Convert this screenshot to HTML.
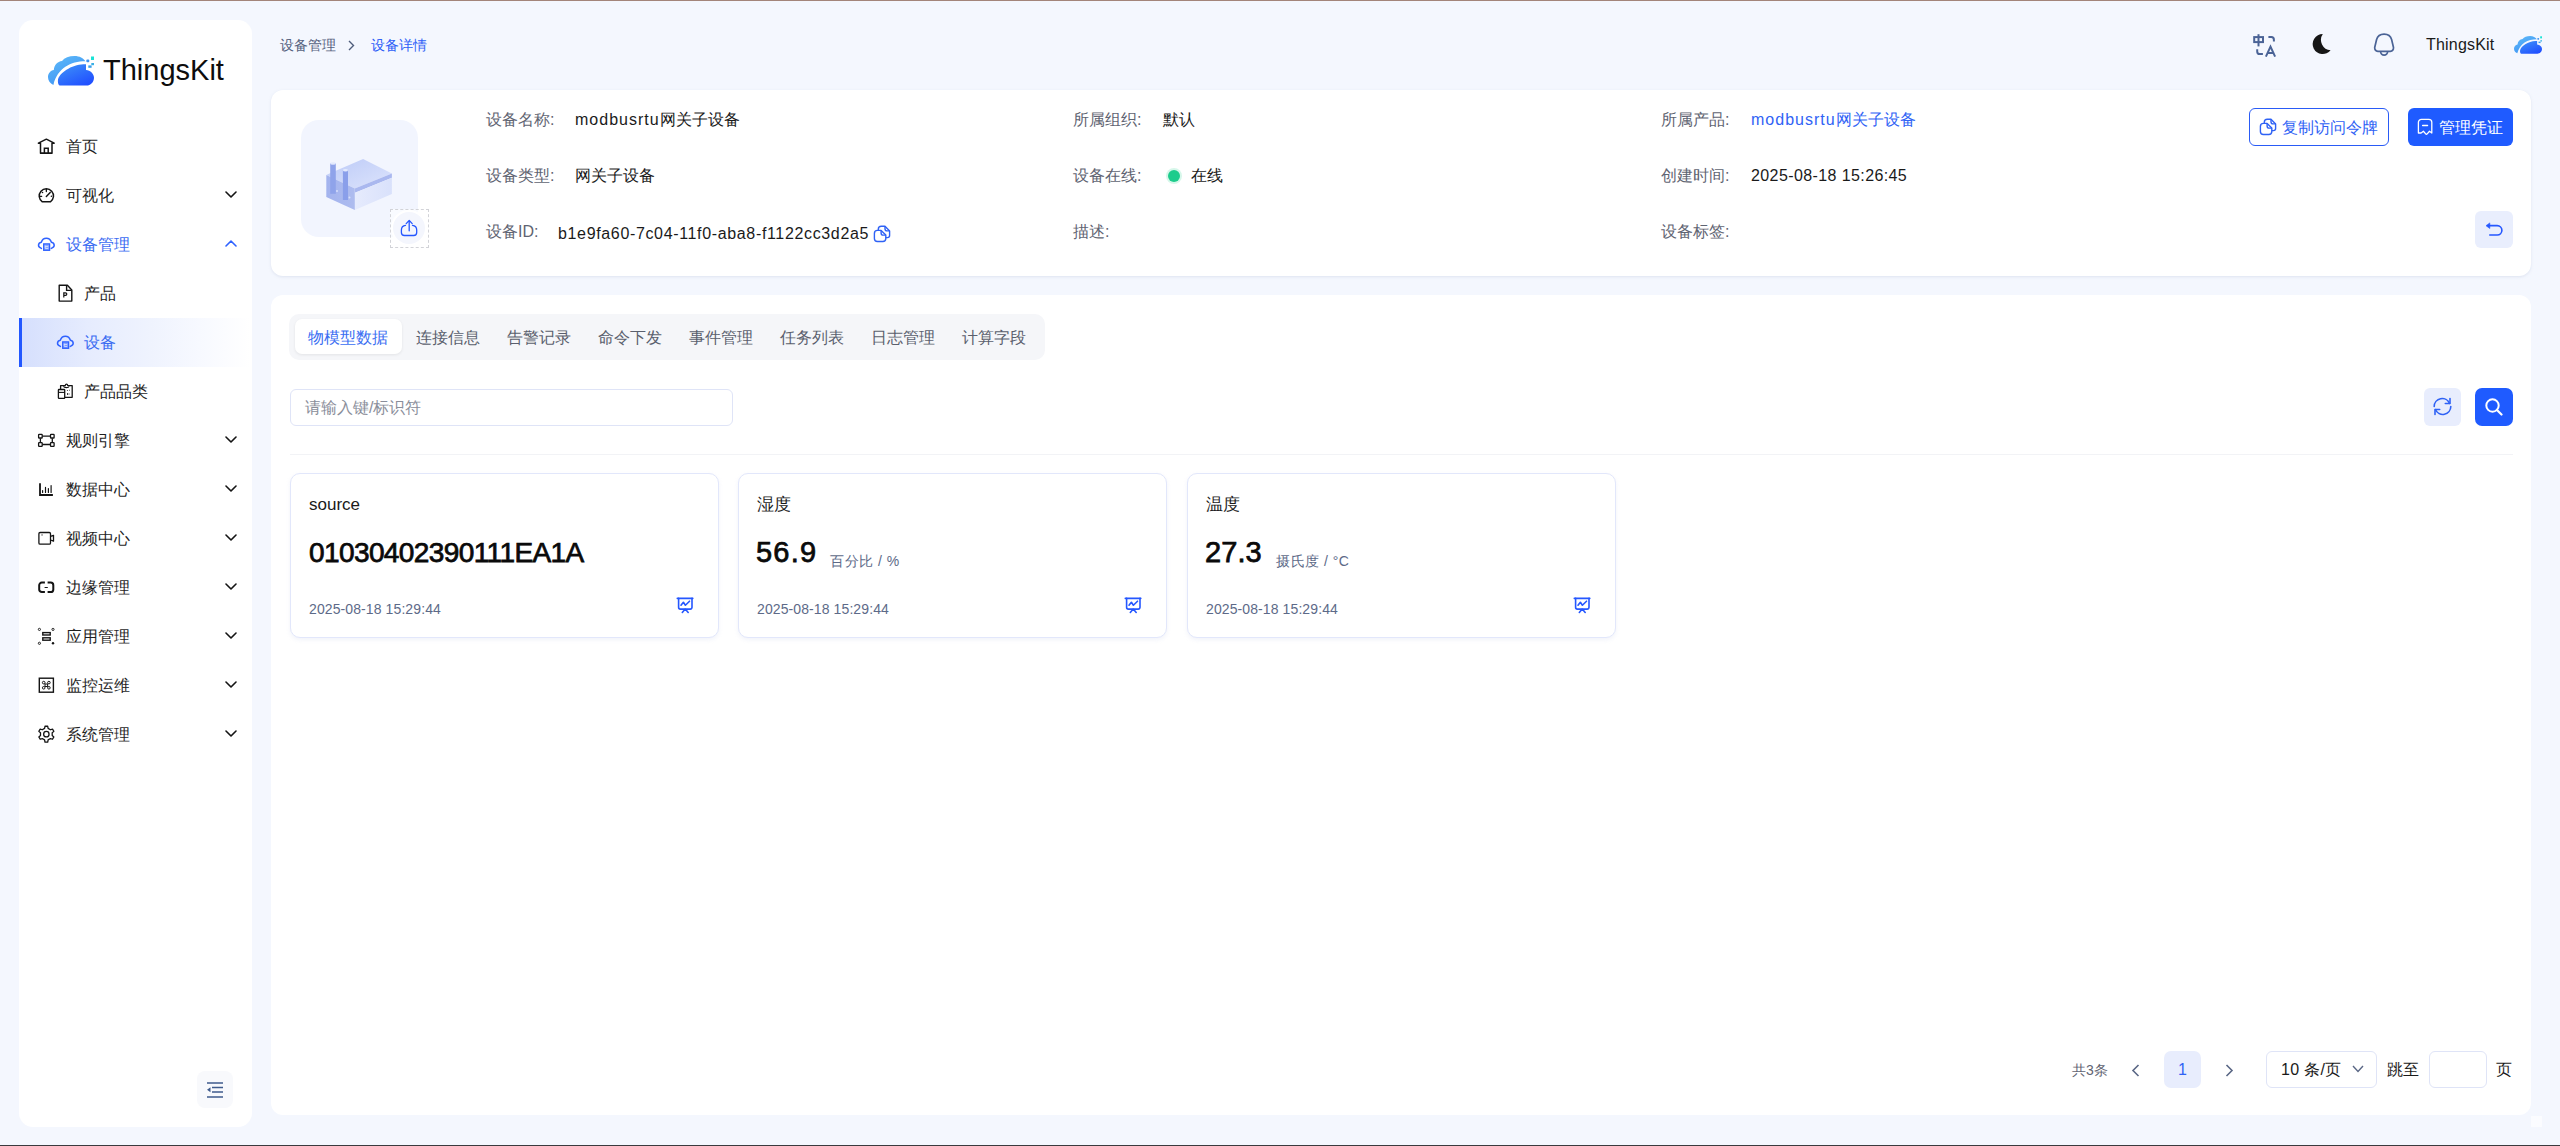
<!DOCTYPE html>
<html><head><meta charset="utf-8">
<style>
*{box-sizing:border-box;margin:0;padding:0}
html,body{width:2560px;height:1146px;overflow:hidden}
body{background:#f4f7fe;font-family:"Liberation Sans",sans-serif;font-size:16px;color:#1f1f1f;position:relative}
.a{position:absolute;white-space:nowrap}
.mt{font-size:16px;line-height:20px;color:#1f1f1f}
.lbl{font-size:16px;line-height:20px;color:#5f6472}
.val{font-size:16px;line-height:20px;color:#1a1a1a}
.tab{font-size:16px;line-height:20px;color:#5a5f6d;top:328px}
.card{background:#fff;border-radius:12px}
.n1{display:inline-block;width:10px;text-indent:-2.5px}
.dc{background:#fff;border:1px solid #e2e7fb;border-radius:10px;box-shadow:0 2px 4px rgba(180,190,230,.18)}
</style></head><body>
<div class="a" style="left:0;top:0;width:2560px;height:1px;background:#a3857a"></div>
<div class="a" style="left:0;top:1145px;width:2560px;height:1px;background:#3a3a3e"></div>

<!-- SIDEBAR -->
<div class="a" style="left:19px;top:20px;width:233px;height:1107px;background:#fff;border-radius:14px"></div>
<svg class="a" style="left:48px;top:56px" width="46" height="30" viewBox="0 0 46 30"><defs>
<linearGradient id="gb" x1="0" y1="0" x2="0.6" y2="1"><stop offset="0" stop-color="#5fbcf9"/><stop offset="1" stop-color="#3e93f4"/></linearGradient>
<linearGradient id="gf" x1="0" y1="0" x2="0.7" y2="1"><stop offset="0" stop-color="#3f95f8"/><stop offset="1" stop-color="#2150ff"/></linearGradient>
</defs>
<path d="M5.4 28.9C2 27.3 0 24.5 0 21.2C0 17.5 2.4 14.6 5.8 14C6.2 9 9.5 5.6 14 5C16.5 1.8 21 0 26.5 0C31.5 0 35.5 2.2 37.5 5.3C23 5.2 9.5 12 5.4 28.9Z" fill="url(#gb)"/>
<path d="M11.6 29.6C10.2 28.6 9.8 26.5 9.9 24.5C10.8 17 23.5 8.8 35.5 8.3L38 8.3L38 14C42.5 14.4 46 17.8 46 21.8C46 26.2 42.5 29.6 38.6 29.6Z" fill="url(#gf)"/>
<rect x="43" y=".5" width="3" height="3.5" fill="#19e3d6"/>
<rect x="38.3" y="3.4" width="3" height="2.8" rx="1" fill="#3d92f2"/>
<rect x="43.3" y="7" width="2.7" height="2.2" fill="#3ab0e6"/>
<rect x="40.3" y="9.4" width="3.3" height="2.4" fill="#3aa0ea"/></svg>
<div class="a" style="left:103px;top:52px;font-size:29px;line-height:36px;color:#0d0d0d">ThingsKit</div>
<div class="a" style="left:20px;top:318px;width:230px;height:49px;background:linear-gradient(90deg,#d5dffd 0%,#e6ecfe 30%,#eff3fe 57%,#f7f9ff 78%,#ffffff 100%)"></div>
<div class="a" style="left:19px;top:318px;width:3px;height:49px;background:#2257ff"></div>
<svg class="a" style="left:34px;top:134px;color:#141414" width="24" height="24" viewBox="0 0 24 24"><path d="M6.5 19.3V9.2H4.4L12.35 5.2 20.2 9.2H18V19.3Z" fill="none" stroke="currentColor" stroke-width="1.5" stroke-linejoin="round"/><path d="M6.5 19.3H18M10.4 19.3V14.3H14.2V19.3" fill="none" stroke="currentColor" stroke-width="1.5"/></svg>
<div class="a mt" style="left:66px;top:137px;color:#1f1f1f">首页</div>
<svg class="a" style="left:34px;top:183px;color:#141414" width="24" height="24" viewBox="0 0 24 24"><path d="M8.3 18.8A7.15 7.15 0 1 1 16.4 18.8Z" fill="none" stroke="currentColor" stroke-width="1.5" stroke-linejoin="round"/><path d="M12.35 13.4 16.2 9.4" fill="none" stroke="currentColor" stroke-width="1.5" stroke-linecap="round"/><path d="M12.35 6.3V8.6M6.3 13.3H7.7" fill="none" stroke="currentColor" stroke-width="1.3" stroke-linecap="round"/><circle cx="8.5" cy="9.5" r=".8" fill="currentColor"/><circle cx="17.4" cy="13.3" r=".8" fill="currentColor"/></svg>
<div class="a mt" style="left:66px;top:186px;color:#1f1f1f">可视化</div>
<svg class="a" style="left:225px;top:191px" width="12" height="8" viewBox="0 0 12 8"><path d="M1 1 6 6 11 1" fill="none" stroke="#141414" stroke-width="1.6" stroke-linecap="round" stroke-linejoin="round"/></svg>
<svg class="a" style="left:34px;top:232px;color:#2f62ff" width="24" height="24" viewBox="0 0 24 24"><path d="M7.4 16.4C5.7 15.8 4.5 14.7 4.5 13.3C4.5 11.9 5.6 10.6 7.3 10.2C8.1 7.9 10.1 6.3 12.35 6.3C14.6 6.3 16.6 7.9 17.4 10.2C19.1 10.6 20.2 11.9 20.2 13.3C20.2 14.7 19 15.8 17.3 16.4" fill="none" stroke="currentColor" stroke-width="1.5" stroke-linecap="round"/><rect x="9.7" y="11.9" width="5.9" height="6.4" fill="currentColor" fill-opacity=".55" stroke="currentColor" stroke-width="1.3"/><path d="M11.2 13.5V16.2M11.2 14.5h3M11.2 16.5h3" stroke="#fff" stroke-width=".7" opacity=".8"/></svg>
<div class="a mt" style="left:66px;top:235px;color:#3b6cf2">设备管理</div>
<svg class="a" style="left:225px;top:240px" width="12" height="8" viewBox="0 0 12 8"><path d="M1 6 6 1 11 6" fill="none" stroke="#2f62ff" stroke-width="1.6" stroke-linecap="round" stroke-linejoin="round"/></svg>
<svg class="a" style="left:54px;top:281px;color:#141414" width="24" height="24" viewBox="0 0 24 24"><path d="M5.2 4.2H13.4L17.8 8.9V20.1H5.2Z" fill="none" stroke="currentColor" stroke-width="1.4" stroke-linejoin="round"/><path d="M12.6 4.4V9.4H17.6" fill="none" stroke="currentColor" stroke-width="1.4"/><path d="M9.8 16.6V11.8h1.7a1.3 1.3 0 0 1 0 2.6H9.8" fill="none" stroke="currentColor" stroke-width="1.2"/></svg>
<div class="a mt" style="left:84px;top:284px;color:#1f1f1f">产品</div>
<svg class="a" style="left:53px;top:330px;color:#2f62ff" width="24" height="24" viewBox="0 0 24 24"><path d="M7.4 16.4C5.7 15.8 4.5 14.7 4.5 13.3C4.5 11.9 5.6 10.6 7.3 10.2C8.1 7.9 10.1 6.3 12.35 6.3C14.6 6.3 16.6 7.9 17.4 10.2C19.1 10.6 20.2 11.9 20.2 13.3C20.2 14.7 19 15.8 17.3 16.4" fill="none" stroke="currentColor" stroke-width="1.5" stroke-linecap="round"/><rect x="9.7" y="11.9" width="5.9" height="6.4" fill="currentColor" fill-opacity=".55" stroke="currentColor" stroke-width="1.3"/><path d="M11.2 13.5V16.2M11.2 14.5h3M11.2 16.5h3" stroke="#fff" stroke-width=".7" opacity=".8"/></svg>
<div class="a mt" style="left:84px;top:333px;color:#3b6cf2">设备</div>
<svg class="a" style="left:54px;top:379px;color:#141414" width="24" height="24" viewBox="0 0 24 24"><path d="M6.6 10.5V6.6H11.2C11.4 5.6 12 5.2 12.5 5.2S13.6 5.6 13.8 6.6H18.2V18.3H10.8" fill="none" stroke="currentColor" stroke-width="1.3" stroke-linejoin="round"/><path d="M9.4 7.4C10 8.4 11 8.6 12.4 8.6S14.8 8.4 15.2 7.4" fill="none" stroke="currentColor" stroke-width="1.1"/><rect x="4.4" y="10.5" width="6.3" height="8.8" rx=".6" fill="none" stroke="currentColor" stroke-width="1.3"/><path d="M4.4 13.4H10.7" fill="none" stroke="currentColor" stroke-width="1.1"/><circle cx="13.4" cy="11.5" r=".5" fill="currentColor"/><path d="M15.5 10.2 15.1 11.6a.45.45 0 0 0 .8 0Z" fill="currentColor"/><ellipse cx="13.6" cy="15" rx=".6" ry=".9" fill="currentColor"/><ellipse cx="15.1" cy="15" rx=".5" ry=".8" fill="currentColor" opacity=".7"/></svg>
<div class="a mt" style="left:84px;top:382px;color:#1f1f1f">产品品类</div>
<svg class="a" style="left:34px;top:428px;color:#141414" width="24" height="24" viewBox="0 0 24 24"><path d="M6.4 10.2V14.5M18.3 10.2V14.5M8.4 8.2H16.3M8.4 16.5H16.3" fill="none" stroke="currentColor" stroke-width="1.3"/><rect x="4.6" y="6.4" width="3.6" height="3.6" rx=".6" fill="none" stroke="currentColor" stroke-width="1.3"/><rect x="16.5" y="6.4" width="3.6" height="3.6" rx=".6" fill="none" stroke="currentColor" stroke-width="1.3"/><rect x="4.6" y="14.7" width="3.6" height="3.6" rx=".6" fill="none" stroke="currentColor" stroke-width="1.3"/><rect x="16.5" y="14.7" width="3.6" height="3.6" rx=".6" fill="none" stroke="currentColor" stroke-width="1.3"/></svg>
<div class="a mt" style="left:66px;top:431px;color:#1f1f1f">规则引擎</div>
<svg class="a" style="left:225px;top:436px" width="12" height="8" viewBox="0 0 12 8"><path d="M1 1 6 6 11 1" fill="none" stroke="#141414" stroke-width="1.6" stroke-linecap="round" stroke-linejoin="round"/></svg>
<svg class="a" style="left:34px;top:477px;color:#141414" width="24" height="24" viewBox="0 0 24 24"><path d="M6 6.3V18H18.9" fill="none" stroke="currentColor" stroke-width="1.8"/><path d="M8.6 13.6V15.4M11.5 10.4V15.4M14.4 11.5V15.4M17.1 8.5V15.4" fill="none" stroke="currentColor" stroke-width="1.2" stroke-linecap="round"/></svg>
<div class="a mt" style="left:66px;top:480px;color:#1f1f1f">数据中心</div>
<svg class="a" style="left:225px;top:485px" width="12" height="8" viewBox="0 0 12 8"><path d="M1 1 6 6 11 1" fill="none" stroke="#141414" stroke-width="1.6" stroke-linecap="round" stroke-linejoin="round"/></svg>
<svg class="a" style="left:34px;top:526px;color:#141414" width="24" height="24" viewBox="0 0 24 24"><rect x="4.9" y="6.5" width="11.6" height="11.7" rx="1.2" fill="none" stroke="currentColor" stroke-width="1.3"/><path d="M16.5 10.4 19.5 9.3V15.2L16.5 14" fill="none" stroke="currentColor" stroke-width="1.3" stroke-linejoin="round"/><rect x="7.4" y="8.3" width="1.3" height="1.3" fill="currentColor" opacity=".7"/></svg>
<div class="a mt" style="left:66px;top:529px;color:#1f1f1f">视频中心</div>
<svg class="a" style="left:225px;top:534px" width="12" height="8" viewBox="0 0 12 8"><path d="M1 1 6 6 11 1" fill="none" stroke="#141414" stroke-width="1.6" stroke-linecap="round" stroke-linejoin="round"/></svg>
<svg class="a" style="left:34px;top:575px;color:#141414" width="24" height="24" viewBox="0 0 24 24"><path d="M10.9 7.6H7.8A2.6 2.6 0 0 0 5.2 10.2V14.4A2.6 2.6 0 0 0 7.8 17H10.9M13.6 7.6H16.7A2.6 2.6 0 0 1 19.3 10.2V14.4A2.6 2.6 0 0 1 16.7 17H13.6" fill="none" stroke="currentColor" stroke-width="2"/><path d="M10.6 12.5H13.8" fill="none" stroke="currentColor" stroke-width="1"/></svg>
<div class="a mt" style="left:66px;top:578px;color:#1f1f1f">边缘管理</div>
<svg class="a" style="left:225px;top:583px" width="12" height="8" viewBox="0 0 12 8"><path d="M1 1 6 6 11 1" fill="none" stroke="#141414" stroke-width="1.6" stroke-linecap="round" stroke-linejoin="round"/></svg>
<svg class="a" style="left:34px;top:624px;color:#141414" width="24" height="24" viewBox="0 0 24 24"><circle cx="5.4" cy="5.4" r="1.1" fill="none" stroke="currentColor" stroke-width=".9"/><circle cx="19" cy="5.4" r="1.1" fill="none" stroke="currentColor" stroke-width=".9"/><circle cx="5.4" cy="19.3" r="1.1" fill="none" stroke="currentColor" stroke-width=".9"/><circle cx="19" cy="19.3" r="1.2" fill="currentColor"/><rect x="8.8" y="8.6" width="7.4" height="2.4" fill="none" stroke="currentColor" stroke-width="1.4"/><rect x="8.8" y="13.8" width="7.4" height="2.4" fill="none" stroke="currentColor" stroke-width="1.4"/></svg>
<div class="a mt" style="left:66px;top:627px;color:#1f1f1f">应用管理</div>
<svg class="a" style="left:225px;top:632px" width="12" height="8" viewBox="0 0 12 8"><path d="M1 1 6 6 11 1" fill="none" stroke="#141414" stroke-width="1.6" stroke-linecap="round" stroke-linejoin="round"/></svg>
<svg class="a" style="left:34px;top:673px;color:#141414" width="24" height="24" viewBox="0 0 24 24"><rect x="5.3" y="5.2" width="14.1" height="14" fill="none" stroke="currentColor" stroke-width="1.4"/><path d="M11 10.8V13.7M13.6 10.8V13.7M10.8 11H13.8M10.8 13.5H13.8" fill="none" stroke="currentColor" stroke-width="1"/><circle cx="9.7" cy="9.6" r="1.3" fill="none" stroke="currentColor" stroke-width="1"/><circle cx="14.9" cy="9.6" r="1.3" fill="none" stroke="currentColor" stroke-width="1"/><circle cx="9.7" cy="14.8" r="1.3" fill="none" stroke="currentColor" stroke-width="1"/><circle cx="14.9" cy="14.8" r="1.3" fill="none" stroke="currentColor" stroke-width="1"/></svg>
<div class="a mt" style="left:66px;top:676px;color:#1f1f1f">监控运维</div>
<svg class="a" style="left:225px;top:681px" width="12" height="8" viewBox="0 0 12 8"><path d="M1 1 6 6 11 1" fill="none" stroke="#141414" stroke-width="1.6" stroke-linecap="round" stroke-linejoin="round"/></svg>
<svg class="a" style="left:34px;top:722px;color:#141414" width="24" height="24" viewBox="0 0 24 24"><path d="M10.58 6.42 L11.00 4.27 L13.70 4.27 L14.12 6.42 L16.43 7.75 L18.50 7.04 L19.86 9.38 L18.20 10.82 L18.20 13.48 L19.86 14.92 L18.50 17.26 L16.43 16.55 L14.12 17.88 L13.70 20.03 L11.00 20.03 L10.58 17.88 L8.27 16.55 L6.20 17.26 L4.84 14.92 L6.50 13.48 L6.50 10.82 L4.84 9.38 L6.20 7.04 L8.27 7.75Z" fill="none" stroke="currentColor" stroke-width="1.3" stroke-linejoin="round"/><circle cx="12.35" cy="12.15" r="2.7" fill="none" stroke="currentColor" stroke-width="1.3"/></svg>
<div class="a mt" style="left:66px;top:725px;color:#1f1f1f">系统管理</div>
<svg class="a" style="left:225px;top:730px" width="12" height="8" viewBox="0 0 12 8"><path d="M1 1 6 6 11 1" fill="none" stroke="#141414" stroke-width="1.6" stroke-linecap="round" stroke-linejoin="round"/></svg>
<div class="a" style="left:197px;top:1071px;width:36px;height:37px;background:#f8f9fc;border-radius:8px"></div>
<svg class="a" style="left:207px;top:1082px" width="16" height="16" viewBox="0 0 16 16"><path d="M0 1h16M5 5.5h11M5 10h11M0 15h16" stroke="#3f5b8c" stroke-width="1.6"/><path d="M0 7.75 3.5 5.2V10.3Z" fill="#3f5b8c"/></svg>

<!-- HEADER -->
<div class="a" style="left:280px;top:35px;font-size:14px;line-height:20px;color:#56627e">设备管理</div>
<svg class="a" style="left:348px;top:40px" width="7" height="11" viewBox="0 0 7 11"><path d="M1 1 5.5 5.5 1 10" fill="none" stroke="#4f5d7c" stroke-width="1.4"/></svg>
<div class="a" style="left:371px;top:35px;font-size:14px;line-height:20px;color:#2d5ef7">设备详情</div>

<svg class="a" style="left:2246px;top:28px" width="34" height="34" viewBox="0 0 34 34"><g fill="none" stroke="#4a6396" stroke-width="2"><rect x="8.2" y="9.1" width="8.8" height="5"/><path d="M12.5 6.2V18.4"/><path d="M22.4 9.1H25.3a2.6 2.6 0 0 1 2.6 2.6V13.6"/><path d="M11.2 21.3V23.4a2.6 2.6 0 0 0 2.6 2.6H16.9"/><path d="M19.9 28.6 24.5 18.6 29.1 28.6M21.6 25H27.4"/></g></svg>
<svg class="a" style="left:2310px;top:30px" width="24" height="28" viewBox="0 0 24 28"><path d="M12.8 4.1A10 10 0 1 0 20.6 20.2A10.3 10.3 0 0 1 12.8 4.1Z" fill="#161616"/></svg>
<svg class="a" style="left:2366px;top:28px" width="34" height="34" viewBox="0 0 34 34"><path d="M12 23.4C9.5 23 8.6 21.5 8.7 19.5L10.6 11.5C11.5 8 14.5 6.1 18.1 6.1C21.7 6.1 24.7 8 25.6 11.5L27.5 19.5C27.6 21.5 26.7 23 24.2 23.4Z" fill="none" stroke="#4a6396" stroke-width="1.7" stroke-linejoin="round"/><path d="M14.6 23.6A3.5 3.5 0 0 0 21.6 23.6" fill="none" stroke="#4a6396" stroke-width="1.7"/></svg>
<div class="a" style="left:2426px;top:35px;font-size:16px;line-height:20px;color:#1a1a1a;letter-spacing:.2px">ThingsKit</div>
<svg class="a" style="left:2514px;top:36px" width="28" height="18" viewBox="0 0 46 30" preserveAspectRatio="none"><defs>
<linearGradient id="gb2" x1="0" y1="0" x2="0.6" y2="1"><stop offset="0" stop-color="#5fbcf9"/><stop offset="1" stop-color="#3e93f4"/></linearGradient>
<linearGradient id="gf2" x1="0" y1="0" x2="0.7" y2="1"><stop offset="0" stop-color="#3f95f8"/><stop offset="1" stop-color="#2150ff"/></linearGradient>
</defs>
<path d="M5.4 28.9C2 27.3 0 24.5 0 21.2C0 17.5 2.4 14.6 5.8 14C6.2 9 9.5 5.6 14 5C16.5 1.8 21 0 26.5 0C31.5 0 35.5 2.2 37.5 5.3C23 5.2 9.5 12 5.4 28.9Z" fill="url(#gb2)"/>
<path d="M11.6 29.6C10.2 28.6 9.8 26.5 9.9 24.5C10.8 17 23.5 8.8 35.5 8.3L38 8.3L38 14C42.5 14.4 46 17.8 46 21.8C46 26.2 42.5 29.6 38.6 29.6Z" fill="url(#gf2)"/>
<rect x="43" y=".5" width="3" height="3.5" fill="#19e3d6"/>
<rect x="38.3" y="3.4" width="3" height="2.8" rx="1" fill="#3d92f2"/>
<rect x="43.3" y="7" width="2.7" height="2.2" fill="#3ab0e6"/>
<rect x="40.3" y="9.4" width="3.3" height="2.4" fill="#3aa0ea"/></svg>

<!-- INFO CARD -->
<div class="a card" style="left:271px;top:90px;width:2260px;height:186px;box-shadow:0 1px 3px rgba(160,170,200,.25)"></div>
<div class="a" style="left:301px;top:120px;width:117px;height:117px;background:#f2f5fe;border-radius:18px"></div>
<svg class="a" style="left:318px;top:150px" width="82" height="68" viewBox="0 0 82 68">
<defs><linearGradient id="dt" x1="0" y1="0" x2="1" y2="1"><stop offset="0" stop-color="#bccaf7"/><stop offset="1" stop-color="#dde4fc"/></linearGradient>
<linearGradient id="dr" x1="0" y1="0" x2="1" y2="0"><stop offset="0" stop-color="#e6ebfd"/><stop offset="1" stop-color="#d9e1fb"/></linearGradient>
<linearGradient id="dl" x1="0" y1="0" x2="1" y2="0"><stop offset="0" stop-color="#a3b3ee"/><stop offset="1" stop-color="#aebcef"/></linearGradient></defs>
<path d="M8.3 24.9 12 23.2 45.1 8.9 73.9 23.4 36.8 38.6Z" fill="url(#dt)"/>
<path d="M36.8 38.6 73.9 23.4V27.8L37 42.8Z" fill="#aab8ef"/>
<path d="M37 42.8 73.9 27.8V43.9L36.8 59.9Z" fill="url(#dr)"/>
<path d="M8.3 24.9 36.8 38.6V59.9L8.3 46.9Z" fill="url(#dl)"/>
<rect x="12.2" y="13.3" width="5.6" height="30.5" fill="#8fa3ea"/><ellipse cx="15" cy="13.5" rx="2.8" ry="1.3" fill="#e3e9fd"/>
<rect x="24.9" y="20" width="5.1" height="30" fill="#8a9fea"/><ellipse cx="27.45" cy="20.2" rx="2.55" ry="1.2" fill="#e3e9fd"/>
<circle cx="19" cy="41" r="1" fill="#d6defb"/><circle cx="31.5" cy="47.5" r="1" fill="#d6defb"/>
</svg>
<div class="a" style="left:390px;top:209px;width:39px;height:39px;border:1px dashed #d2d3d8;background:rgba(255,255,255,.55)"></div>
<div class="a" style="left:393px;top:212px;width:32px;height:32px;border-radius:50%;background:#f4f6fd;box-shadow:0 0 0 2px #fff"></div>
<svg class="a" style="left:386px;top:205px" width="48" height="47" viewBox="0 0 48 47"><g fill="none" stroke="#2557ff" stroke-width="1.3" stroke-linecap="round" stroke-linejoin="round"><path d="M23.2 25.8V15.6M20.2 18.6 23.2 15.4 26.2 18.6"/><path d="M19.5 20.3C17 20.6 15.4 22.6 15.4 25V27.5A3 3 0 0 0 18.4 30.5H27.7A3 3 0 0 0 30.7 27.5V25C30.7 22.6 29 20.6 26.5 20.3"/></g></svg>

<div class="a lbl" style="left:486px;top:110px">设备名称:</div>
<div class="a val" style="left:575px;top:110px"><span style="letter-spacing:1px">modbusrtu</span>网关子设备</div>
<div class="a lbl" style="left:486px;top:166px">设备类型:</div>
<div class="a val" style="left:575px;top:166px">网关子设备</div>
<div class="a lbl" style="left:486px;top:222px">设备ID:</div>
<div class="a val" style="left:558px;top:224px;letter-spacing:.65px">b1e9fa60-7c04-11f0-aba8-f1122cc3d2a5</div>
<svg class="a" style="left:868px;top:219px" width="24" height="24" viewBox="0 0 24 24"><g fill="none" stroke="#2f62f5" stroke-width="1.4" stroke-linejoin="round"><path d="M6.4 14.4a3 3 0 0 1 3-3H13.1L17.8 16.1V19.5a3 3 0 0 1-3 3H9.4a3 3 0 0 1-3-3Z"/><path d="M13.1 11.5V13.9a2.2 2.2 0 0 0 2.2 2.2H17.8"/><path d="M10.3 11.3V10.3a3 3 0 0 1 3-3H17L21.6 11.9V16.5a2.1 2.1 0 0 1-2.1 2.1H17.8"/><path d="M17 7.4V9.7a2.2 2.2 0 0 0 2.2 2.2H21.6"/></g></svg>

<div class="a lbl" style="left:1073px;top:110px">所属组织:</div>
<div class="a val" style="left:1163px;top:110px">默认</div>
<div class="a lbl" style="left:1073px;top:166px">设备在线:</div>
<div class="a" style="left:1166px;top:168px;width:16px;height:16px;border-radius:50%;background:#d6f7ea"></div>
<div class="a" style="left:1168px;top:170px;width:12px;height:12px;border-radius:50%;background:#1dcc8c"></div>
<div class="a val" style="left:1191px;top:166px">在线</div>
<div class="a lbl" style="left:1073px;top:222px">描述:</div>

<div class="a lbl" style="left:1661px;top:110px">所属产品:</div>
<div class="a val" style="left:1751px;top:110px;color:#3063f5"><span style="letter-spacing:1px">modbusrtu</span>网关子设备</div>
<div class="a lbl" style="left:1661px;top:166px">创建时间:</div>
<div class="a val" style="left:1751px;top:166px;letter-spacing:.4px">2025-08-18 15:26:45</div>
<div class="a lbl" style="left:1661px;top:222px">设备标签:</div>

<div class="a" style="left:2249px;top:108px;width:140px;height:38px;border:1px solid #2a5bf6;border-radius:6px;background:#fff"></div>
<svg class="a" style="left:2254px;top:112px" width="24" height="24" viewBox="0 0 24 24"><g fill="none" stroke="#2f62f5" stroke-width="1.4" stroke-linejoin="round"><path d="M6.4 14.4a3 3 0 0 1 3-3H13.1L17.8 16.1V19.5a3 3 0 0 1-3 3H9.4a3 3 0 0 1-3-3Z"/><path d="M13.1 11.5V13.9a2.2 2.2 0 0 0 2.2 2.2H17.8"/><path d="M10.3 11.3V10.3a3 3 0 0 1 3-3H17L21.6 11.9V16.5a2.1 2.1 0 0 1-2.1 2.1H17.8"/><path d="M17 7.4V9.7a2.2 2.2 0 0 0 2.2 2.2H21.6"/></g></svg>
<div class="a" style="left:2282px;top:118px;font-size:16px;line-height:20px;color:#2f62f5">复制访问令牌</div>
<div class="a" style="left:2408px;top:108px;width:105px;height:38px;border-radius:6px;background:#1f5bff"></div>
<svg class="a" style="left:2412px;top:112px" width="24" height="24" viewBox="0 0 24 24"><path d="M6.4 21V10.3a3 3 0 0 1 3-3h7.4a3 3 0 0 1 3 3V21l-2.3-1.7-2.3 2.6a1 1 0 0 1-1.5 0l-2.3-2.6-2.3 1.7Z" fill="none" stroke="#fff" stroke-width="1.3" stroke-linejoin="round"/><path d="M10.6 13.5h5" stroke="#fff" stroke-width="1.3" stroke-linecap="round"/></svg>
<div class="a" style="left:2439px;top:118px;font-size:16px;line-height:20px;color:#fff">管理凭证</div>
<div class="a" style="left:2475px;top:211px;width:38px;height:37px;border-radius:6px;background:#e9eefd"></div>
<svg class="a" style="left:2480px;top:218px" width="24" height="24" viewBox="0 0 24 24"><path d="M8.5 7.6H17.2A4.7 4.7 0 0 1 17.2 17H9.2" fill="none" stroke="#2557ff" stroke-width="1.6"/><path d="M6 7.7 9.8 4.9V10.5Z" fill="#2557ff" stroke="#2557ff" stroke-width=".6" stroke-linejoin="round"/></svg>

<!-- TAB CARD -->
<div class="a card" style="left:271px;top:295px;width:2260px;height:820px"></div>
<div class="a" style="left:289px;top:314px;width:756px;height:46px;background:#f5f6f9;border-radius:10px"></div>
<div class="a" style="left:295px;top:319px;width:107px;height:35px;background:#fff;border-radius:7px;box-shadow:0 1px 3px rgba(0,0,0,.08)"></div>
<div class="a tab" style="left:308px;color:#3a6ef2">物模型数据</div>
<div class="a tab" style="left:416px">连接信息</div>
<div class="a tab" style="left:507px">告警记录</div>
<div class="a tab" style="left:598px">命令下发</div>
<div class="a tab" style="left:689px">事件管理</div>
<div class="a tab" style="left:780px">任务列表</div>
<div class="a tab" style="left:871px">日志管理</div>
<div class="a tab" style="left:962px">计算字段</div>

<div class="a" style="left:290px;top:389px;width:443px;height:37px;border:1px solid #dfe4f7;border-radius:6px"></div>
<div class="a" style="left:305px;top:398px;font-size:16px;line-height:20px;color:#8a8e9a">请输入键/标识符</div>
<div class="a" style="left:2424px;top:388px;width:37px;height:38px;border-radius:6px;background:#e8edfd"></div>
<svg class="a" style="left:2433px;top:397px" width="19" height="19" viewBox="0 0 19 19"><g fill="none" stroke="#2f62f5" stroke-width="1.6" stroke-linecap="round" stroke-linejoin="round"><path d="M1.2 9.5A8 8 0 0 1 16.5 6.3"/><path d="M17 1.5V6.5H12.3"/><path d="M17.8 9.5A8 8 0 0 1 2.5 12.7"/><path d="M2 17.5V12.5H6.7"/></g></svg>
<div class="a" style="left:2475px;top:388px;width:38px;height:38px;border-radius:7px;background:#1f5bff"></div>
<svg class="a" style="left:2485px;top:398px" width="18" height="18" viewBox="0 0 18 18"><circle cx="7.5" cy="7.5" r="6.2" fill="none" stroke="#fff" stroke-width="2"/><path d="M12 12 16.5 16.5" stroke="#fff" stroke-width="2.2" stroke-linecap="round"/></svg>
<div class="a" style="left:290px;top:454px;width:2223px;height:1px;background:#f2f3f6"></div>
<div class="a dc" style="left:290px;top:473px;width:429px;height:165px"></div>
<div class="a" style="left:309px;top:495px;font-size:17px;line-height:20px;color:#1a1a1a">source</div>
<div class="a" style="left:309px;top:536px;letter-spacing:-.6px;font-size:28px;line-height:34px;color:#0a0a0a;-webkit-text-stroke:.75px #0a0a0a;">01030402390111EA1A</div>
<div class="a" style="left:309px;top:600px;font-size:14px;line-height:18px;color:#5d6a88;letter-spacing:.1px">2025-08-18 15:29:44</div>
<svg class="a" style="left:670px;top:590px" width="30" height="30" viewBox="0 0 30 30"><g fill="none" stroke="#2557ff" stroke-width="1.6" stroke-linecap="round" stroke-linejoin="round"><path d="M7.3 8.4H22.8"/><path d="M8.6 8.4V17.3a1.8 1.8 0 0 0 1.8 1.8H20.2a1.8 1.8 0 0 0 1.8-1.8V8.4"/><path d="M11 15.2 13.4 12.3 15.4 15.2 19.5 11.2"/><path d="M15 19.3 12.3 22.5M15.5 19.3 18.2 22.5"/></g></svg>
<div class="a dc" style="left:738px;top:473px;width:429px;height:165px"></div>
<div class="a" style="left:757px;top:495px;font-size:17px;line-height:20px;color:#1a1a1a">湿度</div>
<div class="a" style="left:756px;top:535px;font-size:29px;line-height:34px;color:#0a0a0a;-webkit-text-stroke:.75px #0a0a0a;letter-spacing:1.2px">56.9</div>
<div class="a" style="left:830px;top:552px;font-size:14px;line-height:18px;color:#5d6a88;letter-spacing:.5px">百分比 / %</div>
<div class="a" style="left:757px;top:600px;font-size:14px;line-height:18px;color:#5d6a88;letter-spacing:.1px">2025-08-18 15:29:44</div>
<svg class="a" style="left:1118px;top:590px" width="30" height="30" viewBox="0 0 30 30"><g fill="none" stroke="#2557ff" stroke-width="1.6" stroke-linecap="round" stroke-linejoin="round"><path d="M7.3 8.4H22.8"/><path d="M8.6 8.4V17.3a1.8 1.8 0 0 0 1.8 1.8H20.2a1.8 1.8 0 0 0 1.8-1.8V8.4"/><path d="M11 15.2 13.4 12.3 15.4 15.2 19.5 11.2"/><path d="M15 19.3 12.3 22.5M15.5 19.3 18.2 22.5"/></g></svg>
<div class="a dc" style="left:1187px;top:473px;width:429px;height:165px"></div>
<div class="a" style="left:1206px;top:495px;font-size:17px;line-height:20px;color:#1a1a1a">温度</div>
<div class="a" style="left:1205px;top:535px;font-size:29px;line-height:34px;color:#0a0a0a;-webkit-text-stroke:.75px #0a0a0a;letter-spacing:.1px">27.3</div>
<div class="a" style="left:1276px;top:552px;font-size:14px;line-height:18px;color:#5d6a88;letter-spacing:.5px">摄氏度 / °C</div>
<div class="a" style="left:1206px;top:600px;font-size:14px;line-height:18px;color:#5d6a88;letter-spacing:.1px">2025-08-18 15:29:44</div>
<svg class="a" style="left:1567px;top:590px" width="30" height="30" viewBox="0 0 30 30"><g fill="none" stroke="#2557ff" stroke-width="1.6" stroke-linecap="round" stroke-linejoin="round"><path d="M7.3 8.4H22.8"/><path d="M8.6 8.4V17.3a1.8 1.8 0 0 0 1.8 1.8H20.2a1.8 1.8 0 0 0 1.8-1.8V8.4"/><path d="M11 15.2 13.4 12.3 15.4 15.2 19.5 11.2"/><path d="M15 19.3 12.3 22.5M15.5 19.3 18.2 22.5"/></g></svg>

<!-- PAGINATION -->
<div class="a" style="left:2072px;top:1061px;font-size:14px;line-height:18px;color:#5f6472">共3条</div>
<svg class="a" style="left:2131px;top:1064px" width="9" height="13" viewBox="0 0 9 13"><path d="M7.5 1 2 6.5 7.5 12" fill="none" stroke="#5a6785" stroke-width="1.6"/></svg>
<div class="a" style="left:2164px;top:1051px;width:37px;height:37px;border-radius:7px;background:#e8edfd"></div>
<div class="a" style="left:2164px;top:1060px;width:37px;text-align:center;font-size:16px;line-height:20px;color:#2f62f5">1</div>
<svg class="a" style="left:2225px;top:1064px" width="9" height="13" viewBox="0 0 9 13"><path d="M1.5 1 7 6.5 1.5 12" fill="none" stroke="#5a6785" stroke-width="1.6"/></svg>
<div class="a" style="left:2266px;top:1051px;width:111px;height:37px;border:1px solid #dfe4f7;border-radius:6px"></div>
<div class="a" style="left:2281px;top:1060px;font-size:16px;line-height:20px;color:#1a1a1a;letter-spacing:.3px">10 条/页</div>
<svg class="a" style="left:2352px;top:1065px" width="12" height="8" viewBox="0 0 12 8"><path d="M1 1 6 6.5 11 1" fill="none" stroke="#5a6785" stroke-width="1.4"/></svg>
<div class="a" style="left:2387px;top:1060px;font-size:16px;line-height:20px;color:#1a1a1a">跳至</div>
<div class="a" style="left:2429px;top:1051px;width:58px;height:37px;border:1px solid #dfe4f7;border-radius:6px"></div>
<div class="a" style="left:2496px;top:1060px;font-size:16px;line-height:20px;color:#1a1a1a">页</div>
<div class="a" style="left:2531px;top:1116px;width:11px;height:11px;background:#fbfcff"></div>
</body></html>
